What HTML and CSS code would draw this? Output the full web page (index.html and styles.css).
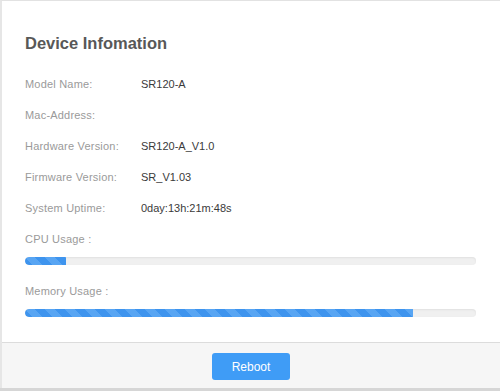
FILE: index.html
```html
<!DOCTYPE html>
<html lang="en">
  <head>
    <meta charset="UTF-8" />
    <meta name="viewport" content="width=device-width, initial-scale=1.0" />
    <title>Device Infomation</title>
    <link rel="stylesheet" href="styles.css">
  </head>
  <body>
    <section class="panel">
      <div class="panel_body">
        <h1>Device Infomation</h1>

        <!-- Device details -->
        <dl class="info">
          <dt>Model Name:</dt>
          <dd>SR120-A</dd>
          <dt>Mac-Address:</dt>
          <dd></dd>
          <dt>Hardware Version:</dt>
          <dd>SR120-A_V1.0</dd>
          <dt>Firmware Version:</dt>
          <dd>SR_V1.03</dd>
          <dt>System Uptime:</dt>
          <dd>0day:13h:21m:48s</dd>
        </dl>

        <!-- Usage bars -->
        <p class="usage_label">CPU Usage :</p>
        <div class="bar"><div class="fill" style="width: 9%"></div></div>

        <p class="usage_label mem">Memory Usage :</p>
        <div class="bar"><div class="fill" style="width: 86%"></div></div>
      </div>

      <footer class="panel_foot">
        <button class="reboot">Reboot</button>
      </footer>
    </section>
  </body>
</html>
```

FILE: styles.css
```css
* {
  margin: 0;
  padding: 0;
  box-sizing: border-box;
}

body {
  background-color: #d6d6d6;
  font-family: 'Liberation Sans', Arial, sans-serif;
  height: 391px;
  overflow: hidden;
}

.panel {
  background-color: white;
  border-top: 1px solid #e2e2e2;
  border-left: 2px solid #e6e6e6;
  height: 388px;
  display: flex;
  flex-direction: column;
}

.panel_body {
  flex: 1;
  padding: 32px 24px 0 23px;
}

h1 {
  font-size: 16.5px;
  font-weight: bold;
  color: #585858;
  line-height: 21px;
  margin-bottom: 15px;
}

/* Info rows */
.info {
  display: grid;
  grid-template-columns: 116px 1fr;
  font-size: 11px;
  line-height: 31px;
}

dt {
  color: #9a9a9a;
  letter-spacing: 0.2px;
}

dd {
  color: #3a3a3a;
}

.usage_label {
  font-size: 11px;
  line-height: 31px;
  color: #9a9a9a;
  letter-spacing: 0.2px;
}

.mem {
  margin-top: 11px;
}

.bar {
  height: 8px;
  margin-top: 2px;
  border-radius: 4px;
  background-color: #f0f0f0;
  box-shadow: inset 0 1px 2px #e0e0e0;
  overflow: hidden;
}

.fill {
  height: 100%;
  border-radius: 4px 0 0 4px;
  background-color: #3e94ee;
  background-image: linear-gradient(
    45deg,
    #58a5f3 25%,
    transparent 25%,
    transparent 50%,
    #58a5f3 50%,
    #58a5f3 75%,
    transparent 75%,
    transparent
  );
  background-size: 20px 20px;
}

/* Footer with button */
.panel_foot {
  height: 46px;
  border-top: 1px solid #dcdcdc;
  background-color: #f6f6f6;
  display: flex;
  justify-content: center;
  padding-top: 10px;
}

.reboot {
  width: 78px;
  height: 27px;
  border: none;
  border-radius: 3px;
  background-color: #3f9cf6;
  color: white;
  font-family: 'Liberation Sans', Arial, sans-serif;
  font-size: 12px;
}
```
